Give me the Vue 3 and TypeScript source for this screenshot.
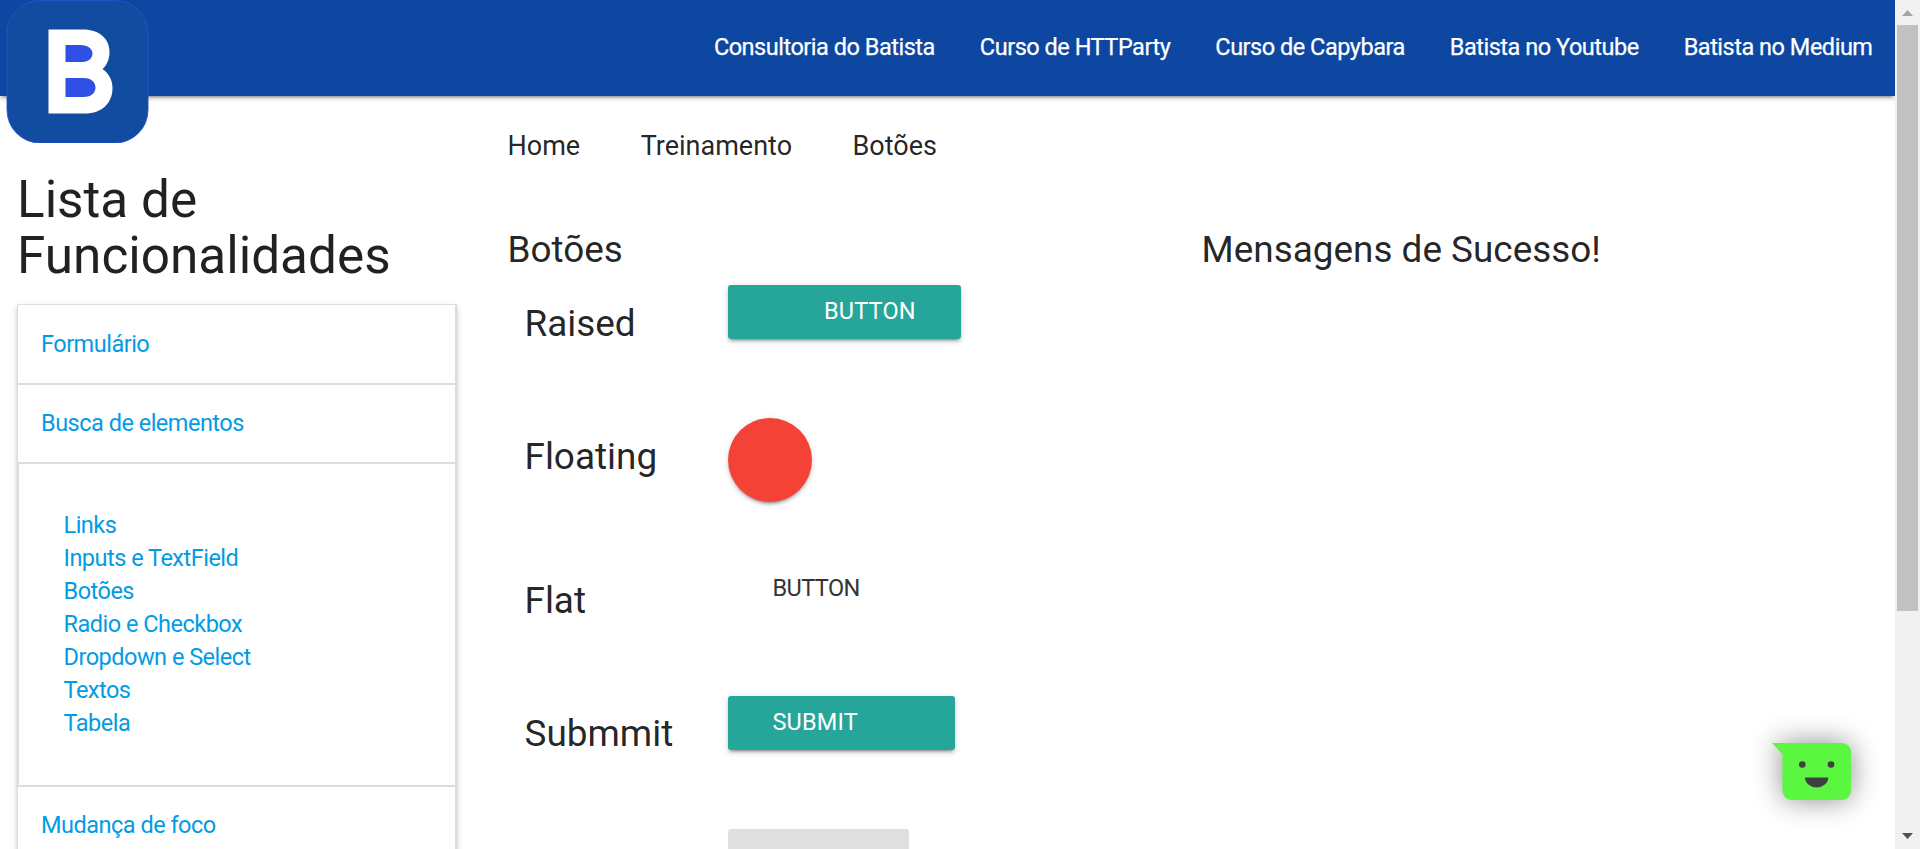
<script setup lang="ts">
interface ButtonRow {
  label: string
  kind: string
  text: string
}

const navLinks: string[] = [
  'Consultoria do Batista',
  'Curso de HTTParty',
  'Curso de Capybara',
  'Batista no Youtube',
  'Batista no Medium',
]
const crumbs: string[] = ['Home', 'Treinamento', 'Botões']
const searchLinks: string[] = [
  'Links',
  'Inputs e TextField',
  'Botões',
  'Radio e Checkbox',
  'Dropdown e Select',
  'Textos',
  'Tabela',
]
const rows: ButtonRow[] = [
  { label: 'Raised', kind: 'raised', text: 'Button' },
  { label: 'Floating', kind: 'floating', text: '' },
  { label: 'Flat', kind: 'flat', text: 'Button' },
  { label: 'Submmit', kind: 'submit', text: 'Submit' },
  { label: '', kind: 'disabled', text: '' },
]
</script>

<template>
  <div class="screen">
    <div class="page">
      <nav class="navbar">
        <svg class="logo" viewBox="0 0 143 143" aria-hidden="true">
          <rect x="1" y="0.5" width="141" height="142.5" rx="33" fill="#114ca1" stroke="#2a4fd0" stroke-width="0.9" />
          <path fill="#fff" d="M42.500 29.500H77C94 29.500 103.500 39 103.500 52C103.500 59 101 65 96.500 69C103 73.500 106.500 80 106.500 88C106.500 103 96 113.500 79 113.500H42.500Z" />
          <path fill="#304fe4" d="M59.500 45H74C82 45 86.500 49 86.500 53.500C86.500 58 82.500 62 76.500 62H59.500ZM59.500 78H78C85 78 89.500 82 89.500 87.500C89.500 93 85 97 78 97H59.500Z" />
        </svg>
        <a v-for="link in navLinks" :key="link" class="nav-link">{{ link }}</a>
      </nav>
      <div class="columns">
        <aside class="sidebar">
          <h4 class="side-title">Lista de Funcionalidades</h4>
          <ul class="menu">
            <li class="menu-head">Formulário</li>
            <li class="menu-head">Busca de elementos</li>
            <li class="menu-body">
              <a v-for="link in searchLinks" :key="link" class="menu-link">{{ link }}</a>
            </li>
            <li class="menu-head">Mudança de foco</li>
          </ul>
        </aside>
        <main class="content">
          <div class="crumbs">
            <a v-for="crumb in crumbs" :key="crumb" class="crumb">{{ crumb }}</a>
          </div>
          <div class="panels">
            <section class="buttons">
              <h5 class="heading">Botões</h5>
              <div v-for="row in rows" :key="row.kind" class="row" :class="'row-' + row.kind">
                <h5 class="label">{{ row.label }}</h5>
                <a class="btn" :class="row.kind">{{ row.text }}</a>
              </div>
            </section>
            <section class="messages">
              <h5 class="heading">Mensagens de Sucesso!</h5>
            </section>
          </div>
        </main>
      </div>
      <svg class="chat" viewBox="0 0 79 57" aria-hidden="true">
        <path fill="#5af640" d="M0 0H70A9 9 0 0 1 79 9V48A9 9 0 0 1 70 57H19.500A9 9 0 0 1 10.500 48V11.500Z" />
        <circle cx="30.300" cy="21.500" r="3.300" fill="#404040" />
        <circle cx="59" cy="21.500" r="3.300" fill="#404040" />
        <path fill="#404040" d="M33 34.500H56.300A11.650 10 0 0 1 33 34.500Z" />
      </svg>
    </div>
    <div class="scrollbar">
      <svg class="arrow" viewBox="0 0 25 25"><path d="M7 16L12.500 10L18 16Z" fill="#a3a3a3" /></svg>
      <div class="thumb"></div>
      <svg class="arrow arrow-down" viewBox="0 0 25 25"><path d="M7 9H18L12.500 15Z" fill="#505050" /></svg>
    </div>
  </div>
</template>

<style>
body {
  margin: 0;
  overflow: hidden;
  background: #fff;
}
</style>

<style scoped>
.screen {
  display: flex;
  width: 1920px;
  height: 849px;
  overflow: hidden;
  font-family: Roboto, sans-serif;
  font-size: 23.5px;
  color: rgba(0, 0, 0, 0.87);
}
.page {
  position: relative;
  width: 1895px;
  height: 849px;
  overflow: hidden;
}
.navbar {
  position: relative;
  z-index: 2;
  display: flex;
  justify-content: flex-end;
  height: 96px;
  background: #0d47a1;
  box-shadow: 0 3px 3px 0 rgba(0, 0, 0, 0.14), 0 1.5px 7.5px 0 rgba(0, 0, 0, 0.12), 0 4.5px 1.5px -3px rgba(0, 0, 0, 0.2);
}
.nav-link {
  padding: 0 22.5px;
  line-height: 94px;
  letter-spacing: -0.48px;
  -webkit-text-stroke: 0.25px #fff;
  color: #fff;
  white-space: nowrap;
}
.logo {
  position: absolute;
  left: 6px;
  top: 0;
  width: 143px;
  height: 143px;
}
.columns {
  display: flex;
}
.sidebar {
  width: 440px;
  padding: 76px 0 0 17px;
}
.side-title {
  margin: 0 0 20px;
  font-size: 51.3px;
  font-weight: 400;
  line-height: 56px;
}
.menu {
  margin: 0;
  padding: 0;
  list-style: none;
  border: 1px solid #ddd;
  border-right-width: 2px;
  width: 437px;
  height: 600px;
  letter-spacing: -0.5px;
  box-shadow: 0 3px 3px 0 rgba(0, 0, 0, 0.14), 0 1.5px 7.5px 0 rgba(0, 0, 0, 0.12), 0 4.5px 1.5px -3px rgba(0, 0, 0, 0.2);
}
.menu-head {
  padding-left: 23px;
  height: 77px;
  line-height: 76px;
  color: #039be5;
  border-bottom: 2px solid #ddd;
}
.menu-head:first-child {
  height: 78px;
  line-height: 78px;
}
.menu-body {
  padding: 45px 0 45px 44.5px;
  border-left: 1px solid #ddd;
  border-bottom: 2px solid #ddd;
}
.menu-link {
  display: block;
  height: 33px;
  line-height: 32px;
  color: #039be5;
}
.content {
  flex: 1;
  padding-left: 50.5px;
}
.crumbs {
  display: flex;
  height: 96px;
  gap: 60.5px;
}
.crumb {
  font-size: 27px;
  line-height: 100px;
}
.panels {
  display: flex;
}
.buttons {
  width: 694px;
}
.heading {
  margin: 38px 0 15px;
  font-size: 36.9px;
  font-weight: 400;
  line-height: 40px;
}
.row {
  display: flex;
  align-items: flex-start;
  height: 133px;
  padding-left: 17px;
}
.row-floating {
  height: 144px;
}
.row-flat {
  height: 134px;
}
.label {
  width: 203.5px;
  margin: 19px 0 0;
  font-size: 36.9px;
  font-weight: 400;
  line-height: 40px;
}
.row-submit .label {
  margin-top: 18px;
}
.btn {
  box-sizing: border-box;
  height: 54px;
  line-height: 52px;
  border-radius: 3px;
  letter-spacing: 0.15px;
  text-transform: uppercase;
  color: #fff;
  background: #26a69a;
  box-shadow: 0 3px 3px 0 rgba(0, 0, 0, 0.14), 0 1.5px 7.5px 0 rgba(0, 0, 0, 0.12), 0 4.5px 1.5px -3px rgba(0, 0, 0, 0.2);
}
.raised {
  width: 233px;
  padding-left: 96px;
}
.floating {
  width: 84px;
  height: 84px;
  border-radius: 50%;
  background: #f44336;
}
.flat {
  padding-left: 44.5px;
  letter-spacing: -0.6px;
  color: #343434;
  background: none;
  box-shadow: none;
}
.submit {
  width: 227px;
  padding-left: 44.5px;
}
.disabled {
  width: 181px;
  background: #dfdfdf;
  box-shadow: none;
}
.chat {
  position: absolute;
  left: 1772px;
  top: 743px;
  width: 79px;
  height: 57px;
  overflow: visible;
  filter: drop-shadow(0 0 14px rgba(0, 0, 0, 0.45));
}
.scrollbar {
  display: flex;
  flex-direction: column;
  align-items: center;
  width: 25px;
  height: 849px;
  background: #f1f1f1;
}
.arrow {
  width: 25px;
  height: 25px;
  flex: none;
}
.arrow-down {
  margin-top: auto;
}
.thumb {
  width: 21px;
  height: 586px;
  background: #c1c1c1;
}
</style>
